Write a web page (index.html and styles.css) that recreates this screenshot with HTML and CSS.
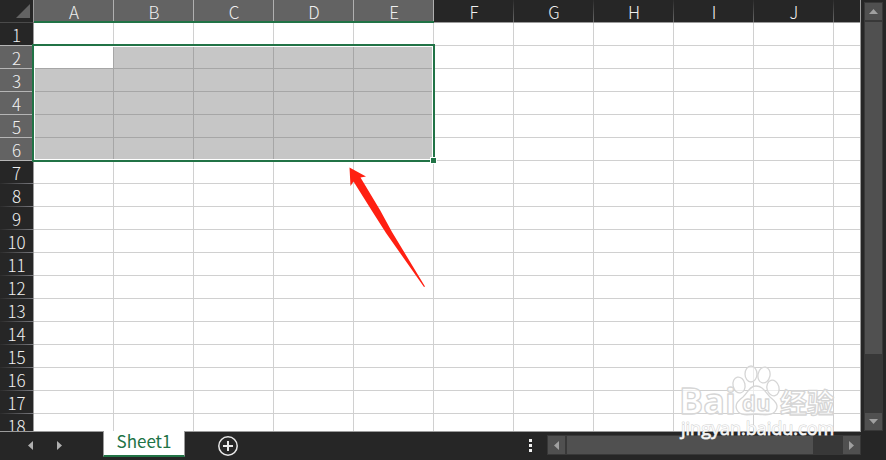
FILE: index.html
```html
<!DOCTYPE html>
<html lang="zh-CN">
<head>
    <meta charset="UTF-8">
    <meta name="viewport" content="width=device-width, initial-scale=1.0">
    <title>Sheet1</title>
    <link rel="stylesheet" href="styles.css">
</head>
<body>
    <div class="workbook">
        <div class="main">
            <div class="grid-pane">
                <table class="grid">
                    <thead>
                        <tr id="columnHeads"></tr>
                    </thead>
                    <tbody id="rows"></tbody>
                </table>
                <div class="selection"><span class="fill-handle"></span></div>
                <svg class="arrow" viewBox="0 0 80 124" aria-hidden="true">
                    <path d="M1.5 1.5 L18 10.5 L12.5 11.5 L32 44 L44 66 L77 120.5 L76 121 L38 67 L24 45 L5.5 15.5 L2.5 20 Z"/>
                </svg>
            </div>
            <div class="scroll-column">
                <div class="scrollbar vertical">
                    <button class="scroll-button" type="button" aria-label="Scroll up">
                        <svg width="9" height="5" viewBox="0 0 9 5"><path d="M0 5 L4.5 0 L9 5 Z"/></svg>
                    </button>
                    <div class="track"><div class="thumb"></div></div>
                    <button class="scroll-button" type="button" aria-label="Scroll down">
                        <svg width="9" height="5" viewBox="0 0 9 5"><path d="M0 0 L4.5 5 L9 0 Z"/></svg>
                    </button>
                </div>
            </div>
        </div>

        <div class="bottom-bar">
            <div class="tab-nav">
                <button type="button" aria-label="Previous sheet">
                    <svg width="5" height="9" viewBox="0 0 5 9"><path d="M5 0 L0 4.5 L5 9 Z"/></svg>
                </button>
                <button type="button" aria-label="Next sheet">
                    <svg width="5" height="9" viewBox="0 0 5 9"><path d="M0 0 L5 4.5 L0 9 Z"/></svg>
                </button>
            </div>
            <button class="sheet-tab" type="button">Sheet1</button>
            <button class="add-sheet" type="button" aria-label="New sheet">
                <svg width="20" height="20" viewBox="0 0 20 20">
                    <circle cx="10" cy="10" r="9.2"/>
                    <path d="M10 5 V15 M5 10 H15"/>
                </svg>
            </button>
            <div class="splitter"><i></i><i></i><i></i></div>
            <div class="scrollbar horizontal">
                <button class="scroll-button" type="button" aria-label="Scroll left">
                    <svg width="5" height="9" viewBox="0 0 5 9"><path d="M5 0 L0 4.5 L5 9 Z"/></svg>
                </button>
                <div class="track"><div class="thumb"></div></div>
                <button class="scroll-button" type="button" aria-label="Scroll right">
                    <svg width="5" height="9" viewBox="0 0 5 9"><path d="M0 0 L5 4.5 L0 9 Z"/></svg>
                </button>
            </div>
        </div>

        <svg class="watermark" viewBox="0 0 166 82">
            <g class="mark">
                <ellipse cx="63" cy="23" rx="6" ry="8" transform="rotate(-12 63 23)"/>
                <ellipse cx="75" cy="12" rx="6" ry="8"/>
                <ellipse cx="88" cy="13" rx="6" ry="8" transform="rotate(12 88 13)"/>
                <ellipse cx="97" cy="26" rx="6" ry="8" transform="rotate(-15 97 26)"/>
                <path d="M80 24 C87 24 89 30 94 35 C99 39 103 43 100 48 C97 54 88 53 80 52 C72 53 64 54 61 48 C58 42 63 38 67 35 C72 31 73 24 80 24 Z"/>
                <text class="brand" x="3" y="52">Bai</text>
                <text class="du" x="66" y="49">du</text>
                <text class="cjk" x="104" y="51">经验</text>
            </g>
            <text class="url" x="5" y="73">jingyan.baidu.com</text>
        </svg>
    </div>

    <script>
        const columns = ['A', 'B', 'C', 'D', 'E', 'F', 'G', 'H', 'I', 'J', ''];
        const rowCount = 18;
        const range = { top: 2, bottom: 6, left: 0, right: 4 };

        const inColumns = c => c >= range.left && c <= range.right;
        const inRows = r => r >= range.top && r <= range.bottom;

        let heads = '<th class="corner"><svg width="14" height="14" viewBox="0 0 14 14"><path d="M14 0 V14 H0 Z"/></svg></th>';
        columns.forEach((name, c) => {
            heads += `<th class="col-head${inColumns(c) ? ' active' : ''}" scope="col">${name}</th>`;
        });
        document.getElementById('columnHeads').innerHTML = heads;

        let body = '';
        for (let r = 1; r <= rowCount; r++) {
            // the row above the range shares its bright divider
            const state = inRows(r) ? ' active' : r === range.top - 1 ? ' before-active' : '';
            body += `<tr><th class="row-head${state}" scope="row">${r}</th>`;
            columns.forEach((name, c) => {
                let cls = '';
                if (inRows(r) && inColumns(c)) {
                    cls = r === range.top && c === range.left ? 'picked current' : 'picked';
                }
                body += `<td class="${cls}"></td>`;
            });
            body += '</tr>';
        }
        document.getElementById('rows').innerHTML = body;
    </script>
</body>
</html>
```

FILE: styles.css
```css
* {
    box-sizing: border-box;
}
body {
    margin: 0;
    background: #262626;
    font-family: "Noto Sans CJK SC", "Noto Sans", sans-serif;
    font-size: 17px;
    font-weight: 300;
}
button {
    margin: 0;
    padding: 0;
    border: none;
    background: none;
    font: inherit;
    display: flex;
    align-items: center;
    justify-content: center;
}
svg {
    display: block;
}
.workbook {
    position: relative;
    display: flex;
    flex-direction: column;
    height: 100vh;
    overflow: hidden;
}
.main {
    flex: 1;
    min-height: 0;
    display: flex;
}

/* cells */
.grid-pane {
    position: relative;
    flex: 1;
    min-width: 0;
    overflow: hidden;
    background: #fff;
    border-right: 1px solid #9b9b9b;
}
.grid {
    width: 100%;
    table-layout: fixed;
    border-collapse: separate;
    border-spacing: 0;
}
.grid th,
.grid td {
    height: 23px;
    padding: 0;
    line-height: 22px;
}
.grid th {
    color: #f0f0f0;
    font-weight: 300;
    text-align: center;
    background-color: #262626;
    background-repeat: no-repeat;
}
.grid td {
    border-right: 1px solid #d0d0d0;
    border-bottom: 1px solid #d0d0d0;
}
.grid th:last-child,
.grid td:last-child {
    width: auto;
    border-right: none;
}
.grid .corner {
    width: 34px;
    border-right: 1px solid #9b9b9b;
    border-bottom: 1px solid #4a4a4a;
}
.corner svg {
    margin: 0 3px 0 auto;
    fill: #636363;
}
.grid .col-head {
    width: 80px;
    padding-top: 3px;
    line-height: 18px;
    vertical-align: top;
    border-bottom: 1px solid #9b9b9b;
    background-image: linear-gradient(#2b2b2b, #6a6a6a);
    background-size: 1px 100%;
    background-position: right;
}
.grid .col-head:last-child {
    background-image: none;
}
.grid .col-head.active {
    border-bottom: 2px solid #217346;
    background-color: #636363;
    background-image: linear-gradient(#b0b0b0, #b0b0b0);
}
.grid .row-head {
    border-right: 1px solid #9b9b9b;
    background-image: linear-gradient(to right, #2b2b2b, #77777c);
    background-size: 100% 1px;
    background-position: bottom;
}
.grid .row-head.active {
    background-color: #636363;
}
.grid .row-head.active,
.grid .row-head.before-active {
    background-image: linear-gradient(#b5b5b5, #b5b5b5);
}
.grid td.picked {
    background: #c6c6c6;
    border-color: #a6a6a6;
}
.grid td.current {
    background: #fff;
}

/* A2:E6 */
.selection {
    position: absolute;
    left: 32px;
    top: 44px;
    width: 403px;
    height: 118px;
    border: 2px solid #217346;
    box-shadow: inset 0 0 0 1px #fff;
}
.fill-handle {
    position: absolute;
    right: -4px;
    bottom: -4px;
    width: 7px;
    height: 7px;
    background: #217346;
    border: 1px solid #fff;
}
.arrow {
    position: absolute;
    left: 348px;
    top: 166px;
    width: 80px;
    height: 124px;
    fill: #ff2012;
}

/* scrollbars */
.scroll-column {
    width: 25px;
    padding: 2px 3px 0;
    display: flex;
}
.scrollbar {
    display: flex;
    border: 1px solid #383838;
    background: #383838;
}
.scrollbar.vertical {
    flex: 1;
    flex-direction: column;
}
.scrollbar.horizontal {
    width: 314px;
    height: 20px;
    margin: 4px 25px 0 0;
}
.scroll-button {
    flex: none;
    width: 17px;
    height: 17px;
    background: #505050;
}
.scroll-button svg {
    fill: #a0a0a0;
}
.horizontal .scroll-button {
    height: 18px;
}
.track {
    flex: 1;
    min-width: 0;
    min-height: 0;
    display: flex;
}
.vertical .track {
    padding-top: 2px;
}
.horizontal .track {
    padding-left: 2px;
}
.thumb {
    background: #505050;
}
.vertical .thumb {
    width: 100%;
    height: 85%;
}
.horizontal .thumb {
    width: 89%;
    height: 100%;
}

/* tabs */
.bottom-bar {
    height: 29px;
    display: flex;
    align-items: flex-start;
    background: linear-gradient(to right, #9b9b9b, #9b9b9b) no-repeat left top / calc(100% - 25px) 1px, #262626;
}
.tab-nav {
    width: 103px;
    height: 29px;
    padding-left: 28px;
    display: flex;
    gap: 24px;
}
.tab-nav svg {
    fill: #b0b0b0;
}
.sheet-tab {
    width: 82px;
    height: 26px;
    background: #fff;
    border-right: 1px solid #9b9b9b;
    border-left: 1px solid #9b9b9b;
    border-bottom: 2px solid #217346;
    color: #217346;
    font-weight: 400;
    line-height: 20px;
    padding-bottom: 4px;
}
.add-sheet {
    margin: 5px 0 0 33px;
}
.add-sheet svg {
    fill: none;
    stroke: #e8e8e8;
    stroke-width: 1.5;
}
.add-sheet path {
    stroke-width: 2;
}
.splitter {
    margin: 8px 15px 0 auto;
    display: flex;
    flex-direction: column;
    gap: 2px;
}
.splitter i {
    width: 3px;
    height: 3px;
    background: #f0f0f0;
}

/* watermark */
.watermark {
    position: absolute;
    right: 44px;
    bottom: 16px;
    width: 166px;
    height: 82px;
    pointer-events: none;
}
.mark {
    fill: rgba(255, 255, 255, 0.6);
    stroke: #d6d6d6;
    stroke-width: 1.3;
    stroke-linejoin: round;
}
.watermark text {
    font-family: "Open Sans", "Noto Sans CJK SC", sans-serif;
    font-weight: 700;
}
.watermark .brand {
    font-size: 36px;
}
.watermark .du {
    font-size: 22px;
}
.watermark .cjk {
    font-family: "Noto Sans CJK SC", sans-serif;
    font-size: 27px;
}
.watermark .url {
    font-size: 18px;
    font-weight: 400;
    fill: rgba(255, 255, 255, 0.9);
    stroke: #d2d2d2;
    stroke-width: 1;
    paint-order: stroke;
}
```
